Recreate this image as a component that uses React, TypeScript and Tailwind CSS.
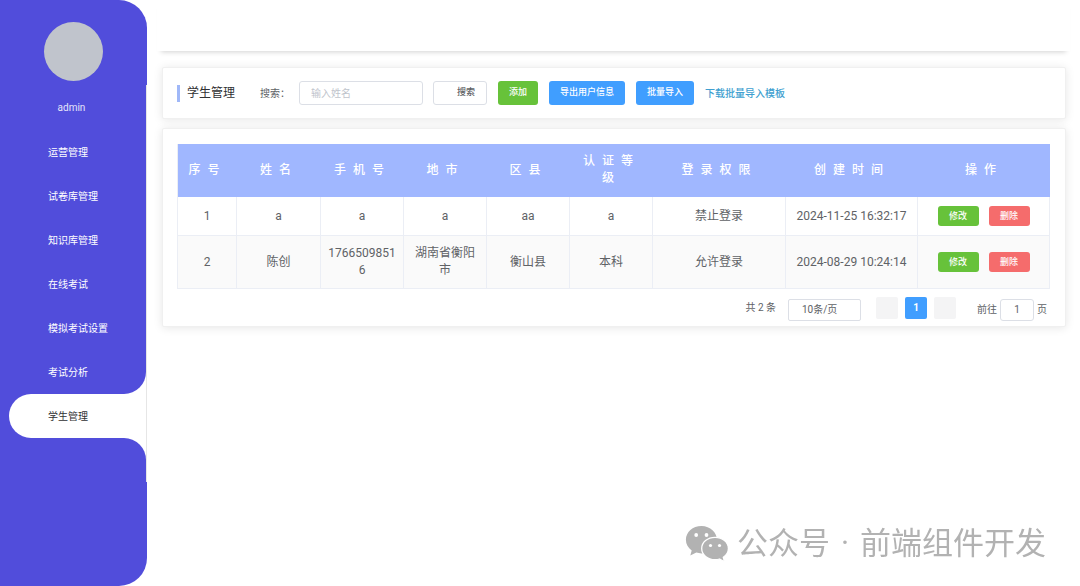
import { useState } from 'react';

const menu = ['运营管理', '试卷库管理', '知识库管理', '在线考试', '模拟考试设置', '考试分析', '学生管理'];

const columns = [
  { label: '序号', width: 'w-[59px]' },
  { label: '姓名', width: 'w-[84px]' },
  { label: '手机号', width: 'w-[83px]' },
  { label: '地市', width: 'w-[83px]' },
  { label: '区县', width: 'w-[83px]' },
  { label: '认证等级', width: 'w-[83px]' },
  { label: '登录权限', width: 'w-[133px]' },
  { label: '创建时间', width: 'w-[132px]' },
  { label: '操作', width: 'w-[132px]' },
];

const students = [
  { id: 1, name: 'a', phone: 'a', city: 'a', county: 'aa', level: 'a', access: '禁止登录', created: '2024-11-25 16:32:17' },
  {
    id: 2,
    name: '陈创',
    phone: '17665098516',
    city: '湖南省衡阳市',
    county: '衡山县',
    level: '本科',
    access: '允许登录',
    created: '2024-08-29 10:24:14',
  },
];

function Sidebar() {
  const [active, setActive] = useState('学生管理');

  return (
    <aside className="w-[147px] shrink-0 bg-[#514ddb] rounded-r-[28px] pt-[22px] text-[10px] text-white">
      <div className="w-[59px] h-[59px] ml-11 rounded-full bg-[#c0c4cc]" />
      <div className="mt-1 pb-11 border-r border-[#e6e6e6]">
        <p className="pt-[15px] pb-[14px] pr-[3px] text-center leading-4 text-[#e4e4fa]">admin</p>
        <nav className="pl-[9px]">
          {menu.map((item) => (
            <a
              key={item}
              href="#"
              onClick={() => setActive(item)}
              className={`relative flex items-center h-11 pl-[39px] ${
                item === active ? 'bg-white rounded-l-full text-[#303133]' : ''
              }`}
            >
              {item}
              {item === active && (
                <>
                  <span className="absolute right-0 bottom-full w-[22px] h-[22px] bg-white">
                    <span className="block w-full h-full bg-[#514ddb] rounded-br-full" />
                  </span>
                  <span className="absolute right-0 top-full w-[22px] h-[22px] bg-white">
                    <span className="block w-full h-full bg-[#514ddb] rounded-tr-full" />
                  </span>
                </>
              )}
            </a>
          ))}
        </nav>
      </div>
    </aside>
  );
}

function Toolbar() {
  const button = 'h-6 px-[11px] rounded-[3px] text-[9px] font-medium text-white';

  return (
    <section className="flex items-center h-[52px] px-[14px] bg-white border border-[#f0f0f0] rounded-xs shadow-[0_1px_10px_rgba(0,0,0,0.1)]">
      <span className="w-[3px] h-[17px] bg-[#a0b8f8]" />
      <h1 className="ml-[7px] text-[12px] text-[#303133]">学生管理</h1>
      <label htmlFor="keyword" className="ml-[25px] w-[39px] text-[10px] whitespace-nowrap">
        搜索：
      </label>
      <input
        id="keyword"
        placeholder="输入姓名"
        className="w-[124px] h-6 px-[11px] border border-[#dcdfe6] rounded-[3px] text-[10px] placeholder:text-[#c0c4cc] outline-none"
      />
      <div className="flex items-center gap-[11px] ml-[10px]">
        <button className="w-[54px] h-6 pl-3 border border-[#dcdfe6] rounded-[3px] text-[9px] font-medium">搜索</button>
        <button className={`${button} bg-[#67c23a]`}>添加</button>
        <button className={`${button} bg-[#409eff]`}>导出用户信息</button>
        <button className={`${button} bg-[#409eff]`}>批量导入</button>
        <a href="#" className="text-[10px] font-medium text-[#409fd0]">
          下载批量导入模板
        </a>
      </div>
    </section>
  );
}

function StudentTable() {
  const cell = 'px-1.5 py-[9px] border-b border-r border-[#ebeef5] break-all';
  const action = 'w-[41px] h-5 rounded-[3px] text-[9px] font-medium text-white';

  return (
    <table className="w-full table-fixed border-separate border-spacing-0 border-l border-[#ebeef5] text-[12px] leading-[17px] text-center">
      <thead>
        <tr className="bg-[#a0b7ff] text-white">
          {columns.map((col) => (
            <th
              key={col.label}
              className={`${col.width} px-1.5 py-[9px] border-b border-[#a0b7ff] font-medium tracking-[7px]`}
            >
              {col.label}
            </th>
          ))}
        </tr>
      </thead>
      <tbody>
        {students.map((s) => (
          <tr key={s.id} className="even:bg-[#fafafa]">
            <td className={cell}>{s.id}</td>
            <td className={cell}>{s.name}</td>
            <td className={cell}>{s.phone}</td>
            <td className={cell}>{s.city}</td>
            <td className={cell}>{s.county}</td>
            <td className={cell}>{s.level}</td>
            <td className={cell}>{s.access}</td>
            <td className={cell}>{s.created}</td>
            <td className={cell}>
              <div className="flex justify-center gap-[10px]">
                <button className={`${action} bg-[#67c23a]`}>修改</button>
                <button className={`${action} bg-[#f56c6c]`}>删除</button>
              </div>
            </td>
          </tr>
        ))}
      </tbody>
    </table>
  );
}

function Pagination() {
  return (
    <div className="flex justify-end items-start pt-2 pr-0.5 text-[10px] leading-[22px]">
      <span className="mr-3">共 2 条</span>
      <select
        aria-label="每页条数"
        className="appearance-none w-[73px] h-[22px] mt-0.5 mr-[15px] pl-[13px] border border-[#dcdfe6] rounded-xs bg-white leading-5"
      >
        <option>10条/页</option>
        <option>20条/页</option>
      </select>
      <div className="flex gap-[7px] mr-[21px]">
        <button aria-label="上一页" disabled className="w-[22px] h-[22px] rounded-xs bg-[#f4f4f5]" />
        <button className="w-[22px] h-[22px] rounded-xs bg-[#409eff] font-bold text-white">1</button>
        <button aria-label="下一页" disabled className="w-[22px] h-[22px] rounded-xs bg-[#f4f4f5]" />
      </div>
      <label className="flex items-center gap-[3px] mt-0.5">
        前往
        <input defaultValue="1" className="w-[34px] h-[22px] border border-[#dcdfe6] rounded-[3px] text-center" />
        页
      </label>
    </div>
  );
}

function Watermark() {
  return (
    <div className="fixed right-[34px] bottom-[22px] flex items-center gap-2 text-[#b2b2b2]">
      <svg width="44" height="36" viewBox="0 0 44 36" fill="currentColor">
        <path d="M16.500 0C7.700 0 .9 6.100 .9 13.800c0 4.400 2.200 8 5.800 10.600L5.300 29.400l6-2.800c1.700.5 3.400.8 5.200.8 8.500 0 15.500-6 15.500-13.400S25.300 0 16.500 0z" />
        <path
          d="M30 11.300c-7.400 0-13.300 5-13.300 11.200s5.900 11.200 13.300 11.200c1.600 0 3.100-.2 4.500-.7l5 2.800-1.200-4.600c3.200-2 5.100-5.100 5.100-8.700 0-6.200-6-11.200-13.400-11.200z"
          stroke="#fff"
          strokeWidth="1.300"
        />
        <circle cx="11.200" cy="9" r="1.900" fill="#fff" />
        <circle cx="21.500" cy="9" r="1.900" fill="#fff" />
        <circle cx="25.500" cy="19.500" r="1.600" fill="#fff" />
        <circle cx="34.500" cy="19.500" r="1.600" fill="#fff" />
      </svg>
      <p className="flex gap-[11px] text-[31px] leading-10 whitespace-nowrap">
        <span>公众号</span>
        <span>·</span>
        <span>前端组件开发</span>
      </p>
    </div>
  );
}

export default function App() {
  return (
    <div className="flex min-h-screen bg-white font-[Roboto,'Noto_Sans_CJK_SC',sans-serif] text-[#606266]">
      <Sidebar />
      <main className="flex-1 min-w-0">
        <header className="h-[51px] mx-[10px] bg-white shadow-[0_5px_5px_-4px_rgba(0,0,0,0.18)]" />
        <div className="flex flex-col gap-[9px] pt-4 pl-[15px] pr-[14px]">
          <Toolbar />
          <section className="pl-[14px] pr-4 pt-[15px] pb-[5px] bg-white border border-[#f0f0f0] rounded-xs shadow-[0_1px_10px_rgba(0,0,0,0.1)]">
            <StudentTable />
            <Pagination />
          </section>
        </div>
      </main>
      <Watermark />
    </div>
  );
}
